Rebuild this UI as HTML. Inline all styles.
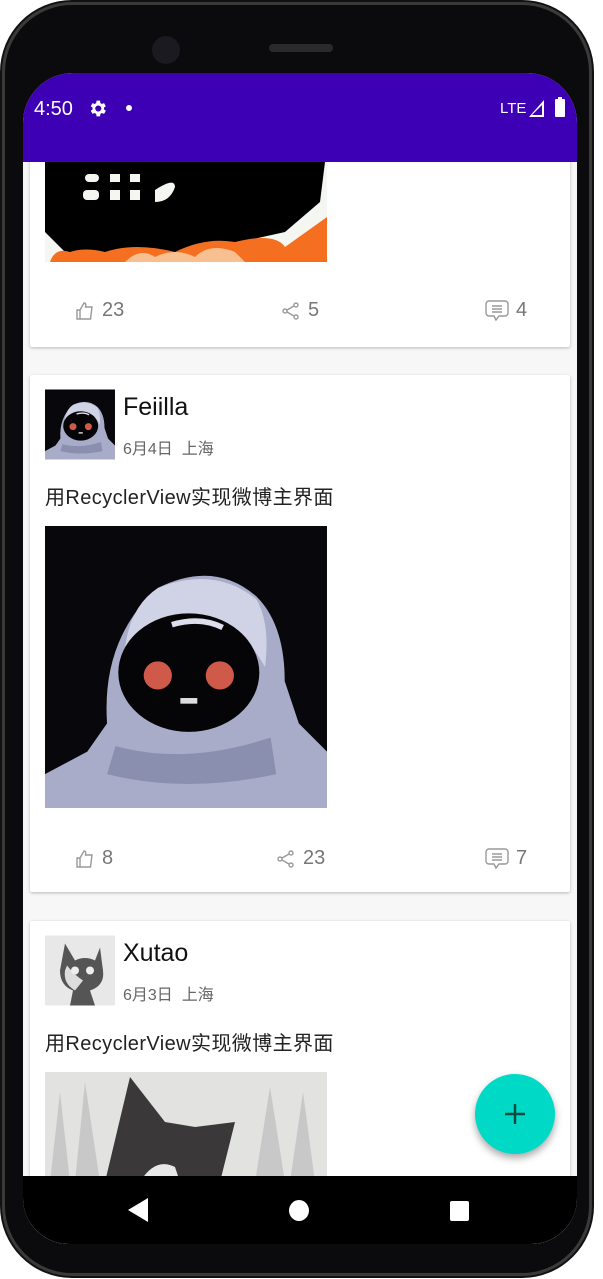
<!DOCTYPE html>
<html><head><meta charset="utf-8"><style>
*{margin:0;padding:0;box-sizing:border-box}
body{width:603px;height:1279px;overflow:hidden;background:#fff;position:relative;font-family:"Liberation Sans","Noto Sans CJK SC",sans-serif}
.phone{position:absolute;left:2px;top:2px;width:590px;height:1274px;border-radius:70px;background:#0b0b0d;border:3px solid #3a3a3a;box-shadow:0 0 0 2px #111}
.screen{position:absolute;left:23px;top:73px;width:554px;height:1171px;border-radius:50px 50px 46px 46px;overflow:hidden;background:#f7f7f7}
.bar{position:absolute;left:0;top:0;width:554px;height:89px;background:#3d00b4;color:#fff;z-index:5}
.card{position:absolute;left:7px;width:540px;background:#fff;box-shadow:0 1px 3px rgba(0,0,0,.25);border-radius:2px}
.name{position:absolute;left:93px;font-size:25px;color:#111}
.date{position:absolute;left:93px;font-size:16px;color:#666}
.txt{position:absolute;left:15px;font-size:20px;letter-spacing:.4px;color:#222}
.act{position:absolute;font-size:20px;color:#777;display:flex;align-items:center;gap:7px}
.nav{position:absolute;left:0;top:1103px;width:554px;height:68px;background:#000;z-index:5}
.fab{position:absolute;left:452px;top:1001px;width:80px;height:80px;border-radius:50%;background:#00d9c5;box-shadow:0 4px 8px rgba(0,0,0,.35);z-index:4}
</style></head><body>
<div class="phone"></div>
<div style="position:absolute;left:152px;top:36px;width:28px;height:28px;border-radius:50%;background:#1a1a20"></div>
<div style="position:absolute;left:269px;top:44px;width:64px;height:8px;border-radius:4px;background:#2a2a2a"></div>
<div class="screen">
 <div class="bar">
  <div style="position:absolute;left:11px;top:25px;font-size:20px">4:50</div>
  <svg style="position:absolute;left:64px;top:25px" width="21" height="21" viewBox="0 0 24 24"><path fill="#fff" d="M19.4 13a7 7 0 000-2l2.1-1.6-2-3.5-2.5 1a7 7 0 00-1.7-1L14.9 3h-4l-.4 2.9a7 7 0 00-1.7 1l-2.5-1-2 3.5L6.4 11a7 7 0 000 2l-2.1 1.6 2 3.5 2.5-1a7 7 0 001.7 1l.4 2.9h4l.4-2.9a7 7 0 001.7-1l2.5 1 2-3.5zM12.9 15.5a3.5 3.5 0 110-7 3.5 3.5 0 010 7z"/></svg>
  <div style="position:absolute;left:103px;top:32px;width:6px;height:6px;border-radius:50%;background:#fff"></div>
  <div style="position:absolute;left:477px;top:27px;font-size:15px">LTE</div>
  <svg style="position:absolute;left:506px;top:27px" width="15" height="17"><path d="M15 0V17H0Z" fill="#fff"/><path d="M13 5V15H3Z" fill="#3d00b4"/></svg>
  <div style="position:absolute;left:532px;top:26px;width:10px;height:18px;background:#fff;border-radius:1px"></div>
  <div style="position:absolute;left:535px;top:24px;width:4px;height:3px;background:#fff"></div>
 </div>
 <!-- card1 -->
 <div class="card" style="top:40px;height:234px">
  <svg style="position:absolute;left:15px;top:49px" width="282" height="100" viewBox="0 0 282 100"><rect width="282" height="100" fill="#f4f6f2"/><path d="M0 0H280L275 40L240 70L150 90L20 90L0 70Z" fill="#000"/><g fill="#f4f6f2"><rect x="40" y="12" width="14" height="8" rx="4"/><rect x="38" y="28" width="16" height="10" rx="4"/><rect x="65" y="12" width="10" height="8"/><rect x="65" y="28" width="10" height="10"/><rect x="85" y="12" width="10" height="8"/><rect x="85" y="28" width="10" height="10"/><path d="M110 28Q130 15 130 25Q125 40 110 40Z"/></g><path d="M5 100Q10 85 25 90Q40 85 60 90Q90 80 130 90Q160 75 190 80Q230 70 240 85L282 55V100Z" fill="#f47020"/><path d="M80 100Q95 85 110 95Q130 85 150 95Q165 80 190 90L200 100Z" fill="#f8c090"/></svg>
  <div class="act" style="left:45px;top:186px"><svg width="20" height="20" viewBox="0 0 20 20" fill="none" stroke="#999" stroke-width="1.4"><path d="M2 9h3v9H2zM5 9l4-7c2 0 2 2 1.5 4H17l-1.5 12H5"/></svg>23</div>
  <div class="act" style="left:251px;top:186px"><svg width="20" height="20" viewBox="0 0 20 20" fill="none" stroke="#999" stroke-width="1.4"><circle cx="15" cy="4" r="2"/><circle cx="4" cy="10" r="2"/><circle cx="15" cy="16" r="2"/><path d="M6 9l7-4M6 11l7 4"/></svg>5</div>
  <div class="act" style="left:455px;top:186px"><svg width="24" height="22" viewBox="0 0 24 22" fill="none" stroke="#999" stroke-width="1.4"><path d="M4 1h16a3 3 0 013 3v9a3 3 0 01-3 3h-6l-3 4-2-4H4a3 3 0 01-3-3V4a3 3 0 013-3z"/><path d="M7 6h10M7 9h10M7 12h10"/></svg>4</div>
 </div>
 <!-- card2 -->
 <div class="card" style="top:302px;height:517px">
  <svg style="position:absolute;left:15px;top:14px" width="70" height="71" viewBox="0 0 100 100"><use href="#astro"/></svg>
  <div class="name" style="top:18px">Feiilla</div>
  <div class="date" style="top:60px">6月4日&nbsp; 上海</div>
  <div class="txt" style="top:106px">用RecyclerView实现微博主界面</div>
  <svg style="position:absolute;left:15px;top:151px" width="282" height="282" viewBox="0 0 100 100"><g id="astro"><rect width="100" height="100" fill="#07070c"/><path d="M0 100V88L15 80L22 70Q20 40 40 22Q60 12 75 25Q85 35 85 55L90 70L100 80V100Z" fill="#a8acc8"/><path d="M40 22Q60 14 75 26Q80 35 78 50Q70 35 55 33Q35 34 28 50Q28 30 40 22Z" fill="#d0d3e5"/><ellipse cx="51" cy="52" rx="25" ry="21" fill="#050508"/><path d="M45 35Q55 32 63 36" stroke="#dde" stroke-width="2" fill="none"/><circle cx="40" cy="53" r="5" fill="#d05a4a"/><circle cx="62" cy="53" r="5" fill="#d05a4a"/><rect x="48" y="61" width="6" height="2" fill="#ddd"/><path d="M25 78Q50 85 80 75L82 88Q50 95 22 88Z" fill="#8a8fb0"/></g></svg>
  <div class="act" style="left:45px;top:472px"><svg width="20" height="20" viewBox="0 0 20 20" fill="none" stroke="#999" stroke-width="1.4"><path d="M2 9h3v9H2zM5 9l4-7c2 0 2 2 1.5 4H17l-1.5 12H5"/></svg>8</div>
  <div class="act" style="left:246px;top:472px"><svg width="20" height="20" viewBox="0 0 20 20" fill="none" stroke="#999" stroke-width="1.4"><circle cx="15" cy="4" r="2"/><circle cx="4" cy="10" r="2"/><circle cx="15" cy="16" r="2"/><path d="M6 9l7-4M6 11l7 4"/></svg>23</div>
  <div class="act" style="left:455px;top:472px"><svg width="24" height="22" viewBox="0 0 24 22" fill="none" stroke="#999" stroke-width="1.4"><path d="M4 1h16a3 3 0 013 3v9a3 3 0 01-3 3h-6l-3 4-2-4H4a3 3 0 01-3-3V4a3 3 0 013-3z"/><path d="M7 6h10M7 9h10M7 12h10"/></svg>7</div>
 </div>
 <!-- card3 -->
 <div class="card" style="top:848px;height:400px">
  <svg style="position:absolute;left:15px;top:14px" width="70" height="71" viewBox="0 0 70 70"><rect width="70" height="70" fill="#e8e8e8"/><path d="M20 8L30 25Q40 20 50 25L55 12L58 35Q60 50 45 55L50 70H25L28 55Q15 50 15 35Z" fill="#555"/><path d="M22 30Q30 40 38 45L30 55Q18 48 20 35Z" fill="#ddd"/><circle cx="30" cy="35" r="4" fill="#eee"/><circle cx="45" cy="35" r="4" fill="#eee"/></svg>
  <div class="name" style="top:18px">Xutao</div>
  <div class="date" style="top:60px">6月3日&nbsp; 上海</div>
  <div class="txt" style="top:106px">用RecyclerView实现微博主界面</div>
  <svg style="position:absolute;left:15px;top:151px" width="282" height="110" viewBox="0 0 282 110"><rect width="282" height="110" fill="#e2e2e0"/><g fill="#c8c8c8"><path d="M5 110L15 20L25 110Z"/><path d="M30 110L40 10L55 110Z"/><path d="M210 110L225 15L240 110Z"/><path d="M245 110L258 20L270 110Z"/></g><path d="M60 110L85 5L120 50L150 55L190 50L175 110Z" fill="#3a3838"/><path d="M95 110Q110 85 130 95L135 110Z" fill="#e8e8e8"/></svg>
 </div>
 <div class="fab"><svg style="position:absolute;left:28px;top:28px" width="24" height="24"><path d="M12 2V22M2 12H22" stroke="#0b4a42" stroke-width="2.4"/></svg></div>
 <div class="nav">
  <svg style="position:absolute;left:105px;top:22px" width="20" height="24"><path d="M20 0V24L0 12Z" fill="#fff"/></svg>
  <div style="position:absolute;left:266px;top:24px;width:20px;height:21px;border-radius:50%;background:#fff"></div>
  <div style="position:absolute;left:427px;top:25px;width:19px;height:20px;border-radius:2px;background:#fff"></div>
 </div>
</div>
</body></html>
